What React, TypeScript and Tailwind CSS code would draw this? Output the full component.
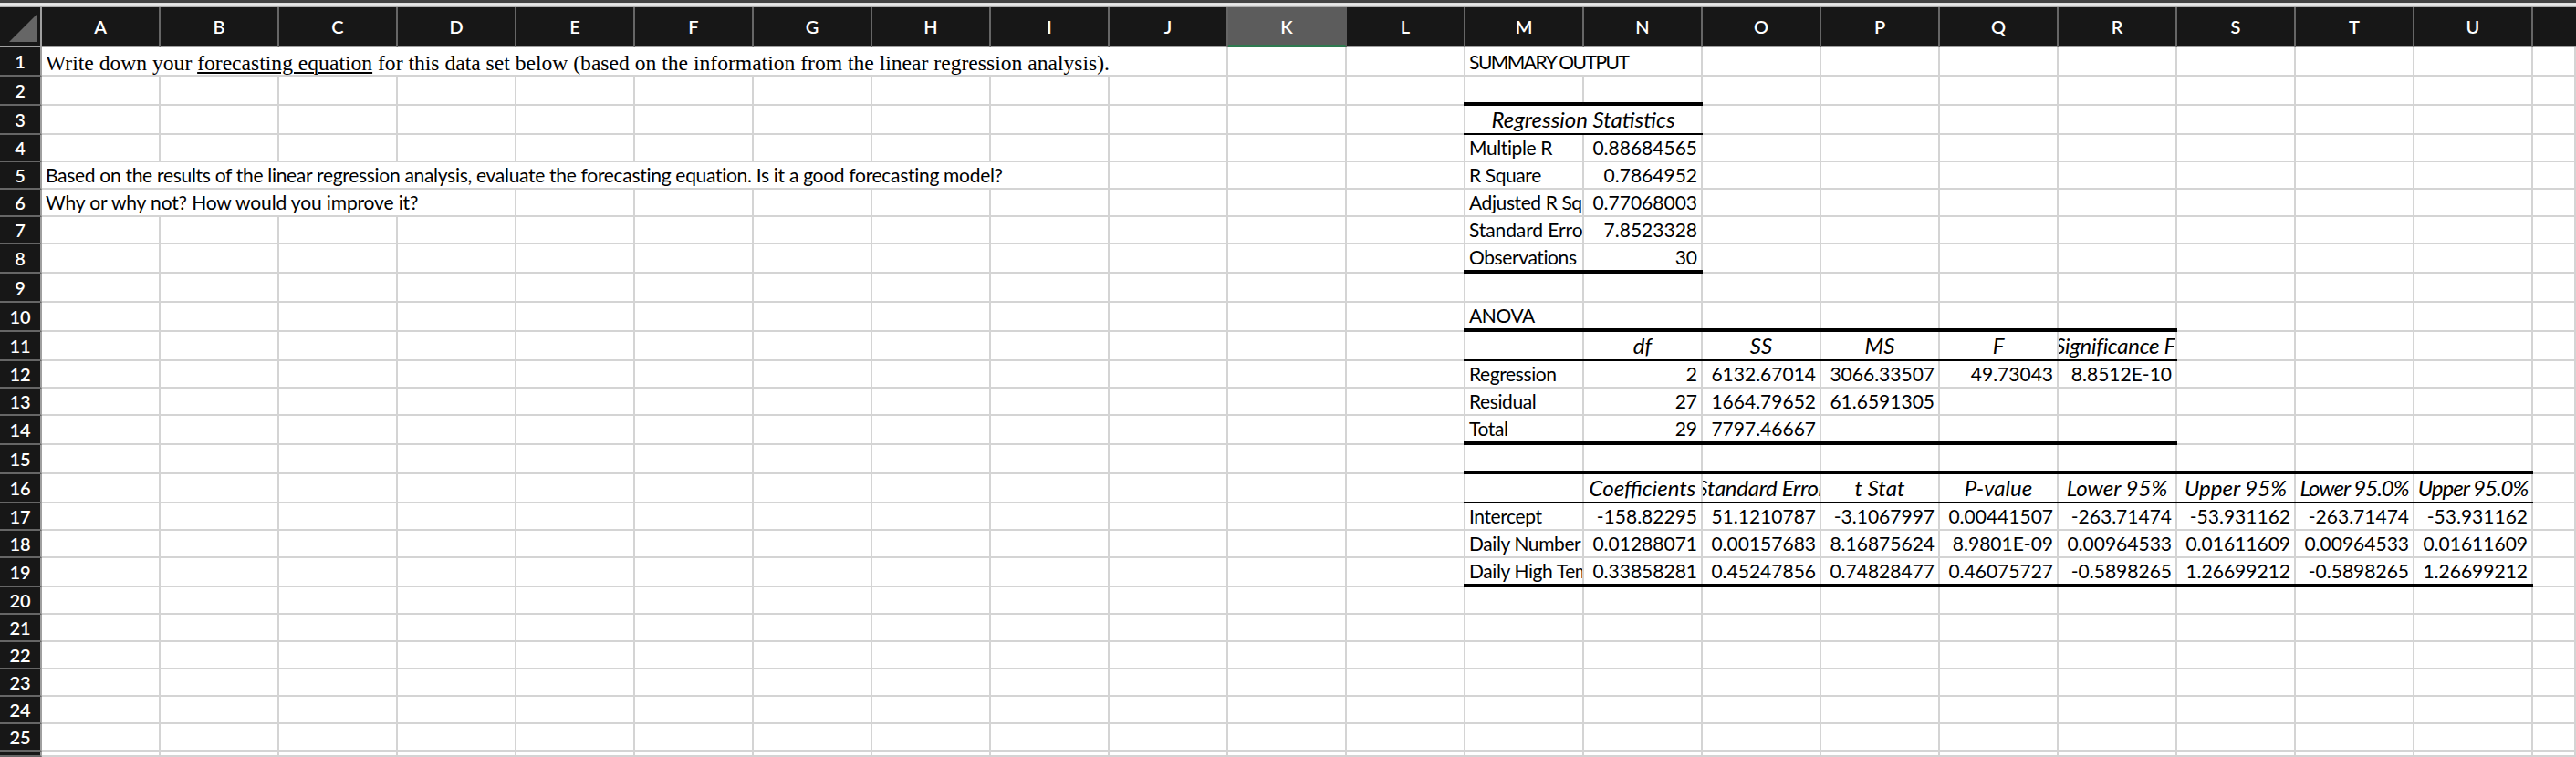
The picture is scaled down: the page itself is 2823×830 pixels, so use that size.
import React from "react";

const COLS = "ABCDEFGHIJKLMNOPQRSTU".split("");
const M = 12, N = 13, O = 14, P = 15, Q = 16, R = 17, S = 18, T = 19, U = 20;

type Spec = {
  c: number;
  t: React.ReactNode;
  a?: "l" | "r" | "c" | "e";
  i?: boolean;
  span?: number;
  serif?: boolean;
  tr?: string;
};

const SPAN: Record<number, string> = {
  1: "",
  2: "col-span-2",
  4: "col-span-4",
  9: "col-span-9",
  10: "col-span-10",
};

const num = (c: number, t: string): Spec => ({ c, t, a: "r" });
const head = (c: number, t: string, tr?: string): Spec => ({ c, t, a: "c", i: true, tr });
const lab = (t: string, tr = "tracking-[-0.4px]"): Spec => ({ c: M, t, tr });

const DATA: Record<number, Spec[]> = {
  1: [
    {
      c: 0,
      span: 10,
      serif: true,
      t: (
        <>
          Write down your <span className="underline decoration-2 underline-offset-2">forecasting equation</span> for this data set below (based on the information from the linear regression analysis).
        </>
      ),
    },
    { c: M, span: 2, t: "SUMMARY OUTPUT", tr: "tracking-[-1.5px]" },
  ],
  3: [{ c: M, span: 2, a: "c", i: true, t: "Regression Statistics" }],
  4: [lab("Multiple R"), num(N, "0.88684565")],
  5: [
    {
      c: 0,
      span: 9,
      tr: "tracking-[-0.3px]",
      t: "Based on the results of the linear regression analysis, evaluate the forecasting equation. Is it a good forecasting model?",
    },
    lab("R Square"),
    num(N, "0.7864952"),
  ],
  6: [
    { c: 0, span: 4, tr: "tracking-[-0.13px]", t: "Why or why not? How would you improve it?" },
    lab("Adjusted R Square"),
    num(N, "0.77068003"),
  ],
  7: [lab("Standard Error", "tracking-[-0.1px]"), num(N, "7.8523328")],
  8: [lab("Observations"), num(N, "30")],
  10: [lab("ANOVA")],
  11: [
    head(N, "df"),
    head(O, "SS"),
    head(P, "MS"),
    head(Q, "F"),
    { c: R, t: "Significance F", a: "e", i: true, tr: "tracking-[-0.3px]" },
  ],
  12: [lab("Regression"), num(N, "2"), num(O, "6132.67014"), num(P, "3066.33507"), num(Q, "49.73043"), num(R, "8.8512E-10")],
  13: [lab("Residual"), num(N, "27"), num(O, "1664.79652"), num(P, "61.6591305")],
  14: [lab("Total"), num(N, "29"), num(O, "7797.46667")],
  16: [
    head(N, "Coefficients"),
    head(O, "Standard Error", "tracking-[-0.3px]"),
    head(P, "t Stat"),
    head(Q, "P-value"),
    head(R, "Lower 95%"),
    head(S, "Upper 95%"),
    head(T, "Lower 95.0%", "tracking-[-1px]"),
    head(U, "Upper 95.0%", "tracking-[-1px]"),
  ],
  17: [lab("Intercept"), num(N, "-158.82295"), num(O, "51.1210787"), num(P, "-3.1067997"), num(Q, "0.00441507"), num(R, "-263.71474"), num(S, "-53.931162"), num(T, "-263.71474"), num(U, "-53.931162")],
  18: [lab("Daily Number of Customers"), num(N, "0.01288071"), num(O, "0.00157683"), num(P, "8.16875624"), num(Q, "8.9801E-09"), num(R, "0.00964533"), num(S, "0.01611609"), num(T, "0.00964533"), num(U, "0.01611609")],
  19: [lab("Daily High Temperature"), num(N, "0.33858281"), num(O, "0.45247856"), num(P, "0.74828477"), num(Q, "0.46075727"), num(R, "-0.5898265"), num(S, "1.26699212"), num(T, "-0.5898265"), num(U, "1.26699212")],
};

const RULES: Record<number, { to: number; thick: boolean }> = {
  2: { to: N, thick: true },
  3: { to: N, thick: false },
  8: { to: N, thick: true },
  10: { to: R, thick: true },
  11: { to: R, thick: false },
  14: { to: R, thick: true },
  15: { to: U, thick: true },
  16: { to: U, thick: false },
  19: { to: U, thick: true },
};

function Cell({ row, col, spec }: { row: number; col: number; spec?: Spec }) {
  const span = spec?.span ?? 1;
  const rule = RULES[row];
  const hasRule = rule && col >= M && col <= rule.to;
  const align = spec?.a ?? "l";
  return (
    <div className={`relative min-w-0 border-r-2 border-b-2 border-[#d4d4d4] ${SPAN[span]}`}>
      {spec && (
        <div
          className={`flex h-full w-full items-end overflow-hidden whitespace-nowrap text-black ${
            align === "r"
              ? "justify-end pr-[4px]"
              : align === "e"
                ? "justify-end"
                : align === "c"
                  ? "justify-center"
                  : "justify-start pl-[4px]"
          } ${
            spec.serif
              ? "font-['Liberation_Serif',serif] text-[23.6px] leading-[26px]"
              : spec.i
                ? "pb-px font-['Lato',sans-serif] text-[24px] italic leading-[29px]"
                : "font-['Lato',sans-serif] text-[21px] leading-[29px]"
          } ${hasRule && rule.thick ? "pb-[2px]" : ""} ${spec.tr ?? ""}`}
        >
          <span className="shrink-0">{spec.t}</span>
        </div>
      )}
      {hasRule && (
        <span
          className={`absolute bottom-[-2px] left-[-2px] right-[-2px] z-10 bg-black ${rule.thick ? "h-1" : "h-0.5"}`}
        />
      )}
    </div>
  );
}

function RowCells({ row }: { row: number }) {
  const specs = DATA[row] ?? [];
  const out: React.ReactNode[] = [];
  let col = 0;
  while (col <= 21) {
    const spec = specs.find((s) => s.c === col);
    out.push(<Cell key={col} row={row} col={col} spec={spec} />);
    col += spec?.span ?? 1;
  }
  return <>{out}</>;
}

export default function App() {
  const rows = Array.from({ length: 26 }, (_, i) => i + 1);
  return (
    <div className="h-[830px] w-[2823px] overflow-hidden bg-white">
      <div className="h-[8px] bg-[linear-gradient(to_bottom,#444_0,#444_3px,#dcdcdc_3px,#f4f4f4_6px,#9a9a9a_8px)]" />
      <div className="grid grid-cols-[46px_repeat(21,130px)_1fr] grid-rows-[44px_32px_32px_32px_30px_30px_30px_30px_32px_32px_32px_32px_30px_30px_32px_32px_32px_30px_30px_32px_30px_30px_30px_30px_30px_30px_6px]">
        {/* corner */}
        <div className="flex items-start border-r-2 border-b-2 border-[#a0a0a0] bg-[#171717]">
          <svg width="44" height="42" viewBox="0 0 44 42" className="block">
            <polygon points="10,38 40,8 40,38" fill="#666666" />
          </svg>
        </div>
        {COLS.map((c, i) => (
          <div
            key={c}
            className={`flex items-center justify-center border-r-2 font-['Lato',sans-serif] text-[20px] font-semibold text-white ${
              i === 10
                ? "border-b-[3px] border-r-[#5c5c5c] border-b-[#2f7a50] bg-[#5c5c5c]"
                : "border-b-2 border-r-[#666666] border-b-[#a0a0a0] bg-[#171717]"
            }`}
          >
            {c}
          </div>
        ))}
        <div className="border-b-2 border-[#a0a0a0] bg-[#171717]" />
        {rows.map((r) => (
          <React.Fragment key={r}>
            <div className="flex items-center justify-center border-r-2 border-b-2 border-r-[#a0a0a0] border-b-[#666666] bg-[#171717] font-['Lato',sans-serif] text-[20px] font-semibold text-white">
              {r <= 25 ? r : ""}
            </div>
            <RowCells row={r} />
          </React.Fragment>
        ))}
      </div>
    </div>
  );
}
